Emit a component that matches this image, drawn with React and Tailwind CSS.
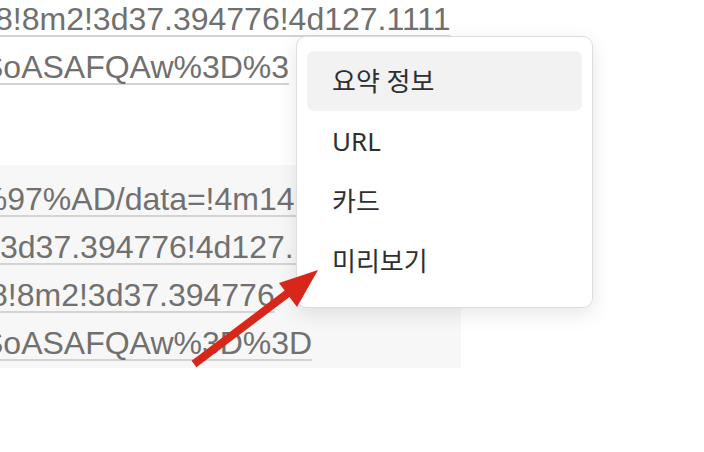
import { useState } from 'react'

const items = ['요약 정보', 'URL', '카드', '미리보기']

function Line({ children, offset }) {
  return (
    <div className={`h-[48px] ${offset}`}>
      <span className="underline decoration-[#d3d3d3] decoration-[1.5px] underline-offset-[5px] [text-decoration-skip-ink:none]">
        {children}
      </span>
    </div>
  )
}

function ViewMenu() {
  const [active] = useState(0)

  return (
    <div className="absolute left-[296px] top-[36px] w-[297px] h-[272px] bg-white rounded-[10px] border border-[#dedede] shadow-[0_6px_20px_rgba(0,0,0,0.10)] px-[10px] pt-[14px] font-['Noto_Sans','Noto_Sans_CJK_KR',sans-serif] text-[26px] text-[#2f2f2f]">
      {items.map((label, i) => (
        <div
          key={label}
          className={`h-[60px] flex items-center pl-[25px] rounded-[7px] ${i === active ? 'bg-[#f2f2f2]' : ''}`}
        >
          {label}
        </div>
      ))}
    </div>
  )
}

function Arrow() {
  return (
    <svg className="absolute left-0 top-0" width="704" height="452" viewBox="0 0 704 452">
      <line x1="194" y1="364" x2="292" y2="290" stroke="#d8261b" strokeWidth="8" strokeLinecap="butt" />
      <polygon points="318,270 279,283 297,307" fill="#d8261b" />
    </svg>
  )
}

export default function App() {
  return (
    <div className="relative w-[704px] h-[452px] overflow-hidden bg-white">
      <div className="font-['Liberation_Sans',Arial,sans-serif] text-[32px] leading-[48px] text-[#707070] whitespace-nowrap">
        <div className="-mt-[5px]">
          <Line offset="-ml-[5px]">8!8m2!3d37.394776!4d127.1111</Line>
          <Line offset="-ml-[18px]">SoASAFQAw%3D%3</Line>
        </div>
        <div className="mt-[74px] w-[461px] h-[203px] bg-[#f7f7f7] pt-[10px] overflow-hidden">
          <Line offset="-ml-[39px]">5%97%AD/data=!4m14!1m7</Line>
          <Line offset="ml-0">3d37.394776!4d127.1111</Line>
          <Line offset="-ml-[10px]">8!8m2!3d37.394776</Line>
          <Line offset="-ml-[18px]">SoASAFQAw%3D%3D</Line>
        </div>
      </div>
      <ViewMenu />
      <Arrow />
    </div>
  )
}
